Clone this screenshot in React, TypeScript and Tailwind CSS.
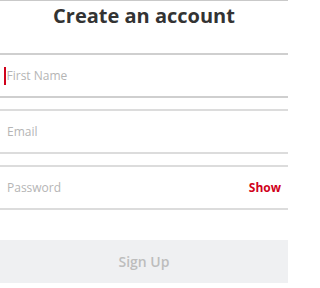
export default function App() {
  return (
    <div
      className="w-[288px] h-[288px] overflow-hidden bg-white border-t border-[#c9c9c9]"
      style={{ fontFamily: "'Open Sans', 'Liberation Sans', sans-serif" }}
    >
      <h1 className="text-center text-[20px] leading-[28px] font-bold text-[#333333] pt-[1px]">Create an account</h1>
      <div className="mt-[23px] flex flex-col gap-[11px]">
        <div className="h-[45px] border-y-2 border-[#cfcfcf] flex items-center pl-[4px] pr-[6px]">
          <span className="w-[1.5px] h-[18px] bg-[#d0021b] mr-[1px]"></span>
          <span className="text-[12px] text-[#b5b5b5]">First Name</span>
        </div>
        <div className="h-[45px] border-y-2 border-[#dcdcdc] flex items-center px-[7px]">
          <span className="text-[12px] text-[#b5b5b5]">Email</span>
        </div>
        <div className="h-[45px] border-y-2 border-[#dcdcdc] flex items-center justify-between pl-[7px] pr-[7px]">
          <span className="text-[12px] text-[#b5b5b5]">Password</span>
          <span className="text-[12px] font-bold text-[#d0021b]">Show</span>
        </div>
      </div>
      <div className="mt-[30px] h-[43px] bg-[#eff0f2] flex items-center justify-center">
        <span className="text-[14px] font-semibold text-[#bdbdbd]">Sign Up</span>
      </div>
    </div>
  );
}
